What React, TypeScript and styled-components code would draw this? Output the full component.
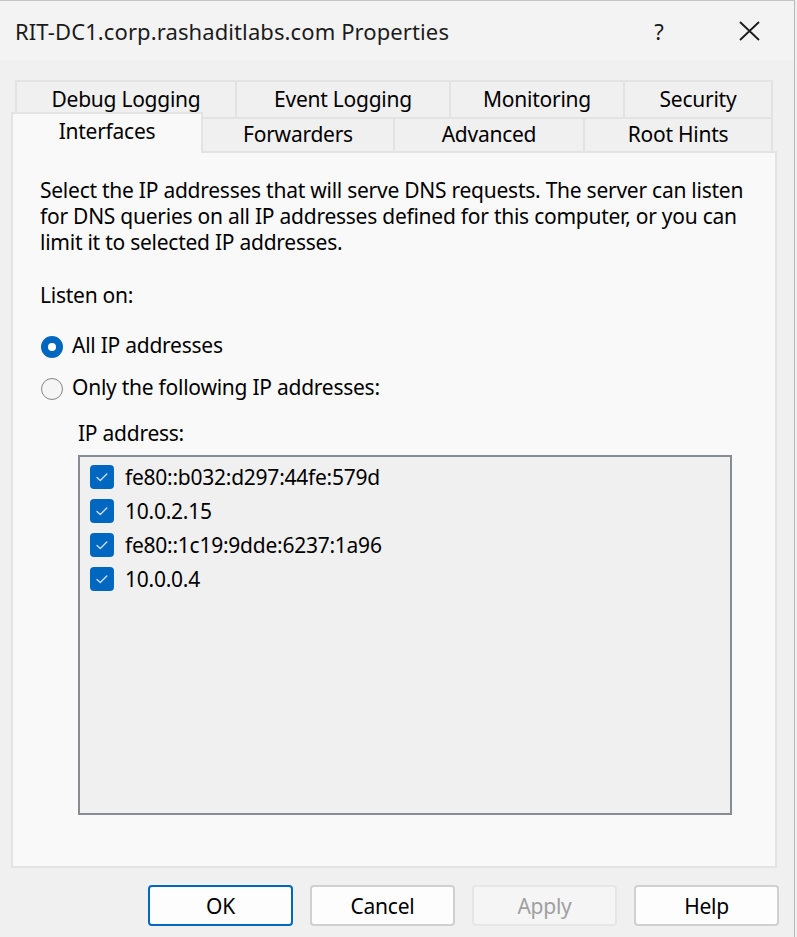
import React from "react";
import styled, { createGlobalStyle } from "styled-components";

const GlobalStyle = createGlobalStyle`
  html, body {
    margin: 0;
    padding: 0;
    background: #f0f0f0;
  }
  body {
    font-family: "Segoe UI", "Noto Sans", sans-serif;
    color: #000;
  }
`;

const backTabs = [
  { label: "Debug Logging", width: 222 },
  { label: "Event Logging", width: 216 },
  { label: "Monitoring", width: 176 },
  { label: "Security", width: 150 },
];

const frontTabs = [
  { label: "Interfaces", width: 192, active: true },
  { label: "Forwarders", width: 194 },
  { label: "Advanced", width: 192 },
  { label: "Root Hints", width: 190 },
];

const addresses = [
  "fe80::b032:d297:44fe:579d",
  "10.0.2.15",
  "fe80::1c19:9dde:6237:1a96",
  "10.0.0.4",
];

const CheckIcon = () => (
  <svg width="24" height="24" viewBox="0 0 24 24">
    <path d="M7 12.5 L10.3 15.6 L16.8 9" fill="none" stroke="#c9dcf2" strokeWidth="1.4" strokeLinecap="round" strokeLinejoin="round" />
  </svg>
);

const CloseIcon = () => (
  <svg width="23" height="20" viewBox="0 0 23 20">
    <path d="M2 1 L21 19 M21 1 L2 19" stroke="#1a1a1a" strokeWidth="1.8" />
  </svg>
);

const App: React.FC = () => {
  return (
    <>
      <GlobalStyle />
      <Window>
        <TitleBar>
          <Title>RIT-DC1.corp.rashaditlabs.com Properties</Title>
          <CaptionButton>?</CaptionButton>
          <CaptionButton>
            <CloseIcon />
          </CaptionButton>
        </TitleBar>
        <Body>
          <BackRow>
            {backTabs.map((t) => (
              <Tab key={t.label} $width={t.width} $row="back">{t.label}</Tab>
            ))}
          </BackRow>
          <FrontRow>
            {frontTabs.map((t) => (
              <Tab key={t.label} $width={t.width} $row="front" $active={t.active}>{t.label}</Tab>
            ))}
          </FrontRow>
          <Panel>
            <Paragraph>
              Select the IP addresses that will serve DNS requests. The server can listen<br />
              for DNS queries on all IP addresses defined for this computer, or you can<br />
              limit it to selected IP addresses.
            </Paragraph>
            <Label>Listen on:</Label>
            <RadioGroup>
              <RadioRow>
                <Radio $checked />
                <span>All IP addresses</span>
              </RadioRow>
              <RadioRow>
                <Radio />
                <span>Only the following IP addresses:</span>
              </RadioRow>
            </RadioGroup>
            <Indented>
              <Label>IP address:</Label>
              <ListBox>
                {addresses.map((a) => (
                  <ListItem key={a}>
                    <CheckBox>
                      <CheckIcon />
                    </CheckBox>
                    <span>{a}</span>
                  </ListItem>
                ))}
              </ListBox>
            </Indented>
          </Panel>
          <ButtonRow>
            <Button $primary>OK</Button>
            <Button>Cancel</Button>
            <Button disabled>Apply</Button>
            <Button>Help</Button>
          </ButtonRow>
        </Body>
      </Window>
    </>
  );
};

const Window = styled.div`
  width: 795px;
  height: 937px;
  box-sizing: border-box;
  border-top: 1px solid #c6c6c6;
  border-right: 1px solid #b9b9b9;
  background: #f0f0f0;
  display: flex;
  flex-direction: column;
  overflow: hidden;
`;

const TitleBar = styled.div`
  height: 59px;
  flex-shrink: 0;
  background: #f3f3f3;
  display: flex;
  align-items: center;
  padding-left: 15px;
`;

const Title = styled.div`
  flex: 1;
  font-size: 22px;
  letter-spacing: 0.1px;
  color: #1b1b1b;
  white-space: nowrap;
`;

const CaptionButton = styled.div`
  width: 90px;
  height: 59px;
  display: flex;
  align-items: center;
  justify-content: center;
  font-size: 22px;
  color: #1b1b1b;
`;

const Body = styled.div`
  flex: 1;
  display: flex;
  flex-direction: column;
  padding: 20px 17px 0 11px;
`;

const BackRow = styled.div`
  display: flex;
  padding-left: 4px;
  margin-bottom: -5px;
`;

const FrontRow = styled.div`
  display: flex;
  align-items: flex-end;
  position: relative;
  z-index: 1;
  margin-bottom: -2px;
`;

const Tab = styled.div<{ $width: number; $row: "back" | "front"; $active?: boolean }>`
  width: ${(p) => p.$width}px;
  box-sizing: border-box;
  height: ${(p) => (p.$row === "back" ? 37 : p.$active ? 41 : 34)}px;
  margin-bottom: ${(p) => (p.$row === "front" && !p.$active ? 2 : 0)}px;
  border: 2px solid #e3e3e3;
  border-bottom: none;
  background: ${(p) => (p.$active ? "#f9f9f9" : "#f0f0f0")};
  position: relative;
  z-index: ${(p) => (p.$active ? 2 : 1)};
  font-size: 21px;
  letter-spacing: -0.25px;
  line-height: 26px;
  text-align: center;
  padding-top: ${(p) => (p.$row === "back" ? 4 : p.$active ? 4 : 2)}px;
  white-space: nowrap;
  & + & {
    margin-left: -2px;
  }
`;

const Panel = styled.div`
  width: 766px;
  height: 717px;
  box-sizing: border-box;
  border: 2px solid #e3e3e3;
  background: #f9f9f9;
  padding: 24px 0 0 27px;
  font-size: 21px;
  letter-spacing: -0.25px;
  line-height: 26px;
`;

const Paragraph = styled.div`
  white-space: nowrap;
  margin-bottom: 27px;
`;

const Label = styled.div`
  margin-bottom: 21px;
`;

const RadioGroup = styled.div`
  display: flex;
  flex-direction: column;
  gap: 10px;
`;

const RadioRow = styled.div`
  display: flex;
  align-items: center;
  height: 32px;
  gap: 9px;
  margin-left: 1px;
`;

const Radio = styled.span<{ $checked?: boolean }>`
  width: 22px;
  height: 22px;
  box-sizing: border-box;
  border-radius: 50%;
  flex-shrink: 0;
  position: relative;
  top: 2px;
  background: ${(p) => (p.$checked ? "#0067c0" : "#f5f5f5")};
  border: ${(p) => (p.$checked ? "none" : "1.6px solid #858585")};
  &::after {
    content: "";
    display: ${(p) => (p.$checked ? "block" : "none")};
    position: absolute;
    left: 7px;
    top: 7px;
    width: 8px;
    height: 8px;
    border-radius: 50%;
    background: #fff;
  }
`;

const Indented = styled.div`
  margin-left: 38px;
  margin-top: 17px;
  ${Label} {
    margin-bottom: 9px;
  }
`;

const ListBox = styled.div`
  width: 654px;
  height: 360px;
  box-sizing: border-box;
  border: 2px solid #878b92;
  background: #f0f0f0;
  padding: 3px 0 0 10px;
`;

const ListItem = styled.div`
  display: flex;
  align-items: center;
  height: 34px;
  gap: 11px;
`;

const CheckBox = styled.span`
  width: 24px;
  height: 24px;
  border-radius: 4px;
  background: #0067c0;
  display: flex;
  flex-shrink: 0;
`;

const ButtonRow = styled.div`
  display: flex;
  justify-content: flex-end;
  gap: 17px;
  margin-top: 17px;
  margin-right: -2px;
`;

const Button = styled.button<{ $primary?: boolean }>`
  width: 145px;
  height: 41px;
  box-sizing: border-box;
  border-radius: 4px;
  font-family: inherit;
  font-size: 21px;
  letter-spacing: -0.25px;
  padding: 0;
  color: #000;
  background: #fdfdfd;
  border: ${(p) => (p.$primary ? "2px solid #0067c0" : "2px solid #d0d0d0")};
  &:disabled {
    background: #f5f5f5;
    border-color: #e6e6e6;
    color: #a0a0a0;
  }
`;

export default App;
